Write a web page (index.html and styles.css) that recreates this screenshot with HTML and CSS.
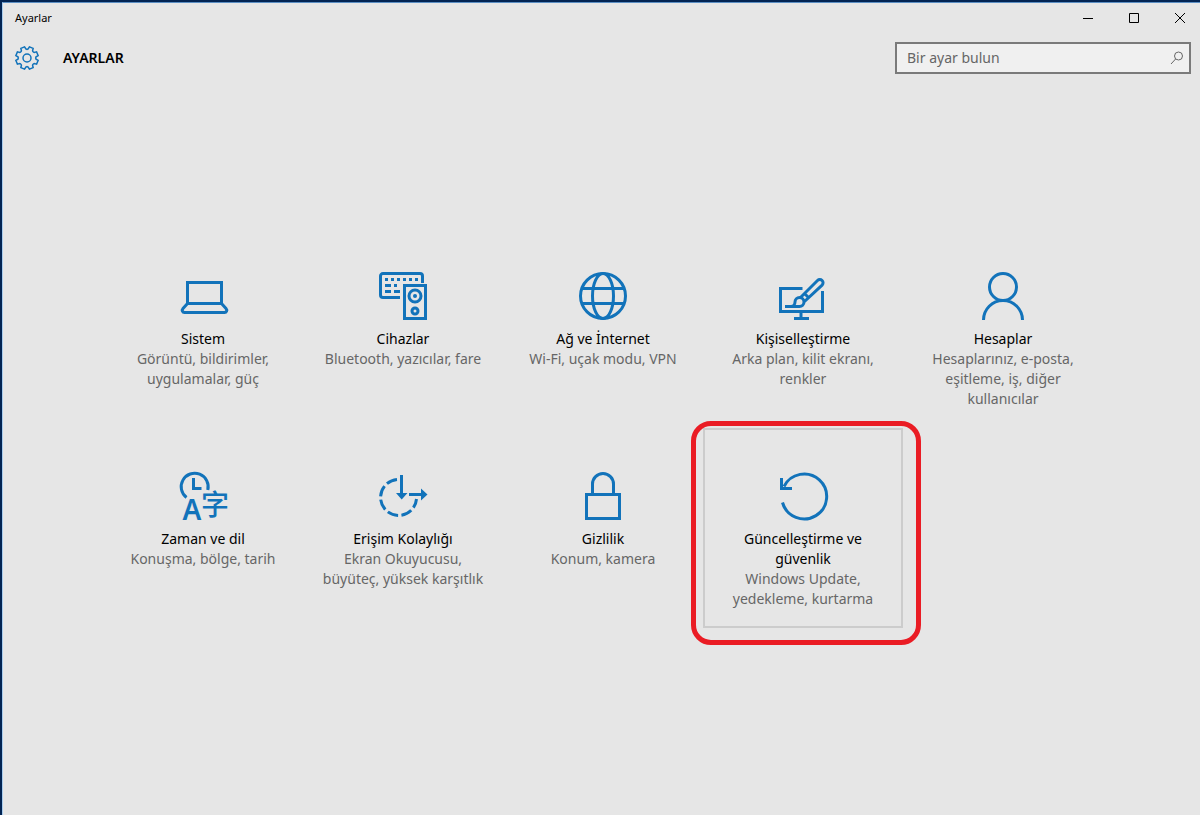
FILE: index.html
```html
<!DOCTYPE html>
<html lang="tr">
<head>
    <meta charset="UTF-8">
    <meta name="viewport" content="width=device-width, initial-scale=1.0">
    <title>Ayarlar</title>
    <link rel="stylesheet" href="styles.css">
</head>
<body>
    <div class="window">
        <div class="titlebar">
            <span class="caption">Ayarlar</span>
            <div class="window-buttons">
                <button type="button" aria-label="Simge durumuna küçült"><svg width="10" height="10" viewBox="0 0 10 10"><path d="M0 5.5h10"/></svg></button>
                <button type="button" aria-label="Ekranı kapla"><svg width="10" height="10" viewBox="0 0 10 10"><path d="M.5.5h9v9h-9z"/></svg></button>
                <button type="button" aria-label="Kapat"><svg width="10" height="10" viewBox="0 0 10 10"><path d="M0 0l10 10M10 0L0 10"/></svg></button>
            </div>
        </div>

        <header class="header">
            <svg class="gear" width="24" height="24" viewBox="-12 -12 24 24">
                <defs><path id="tooth" d="M-3.3-7.9L-2.4-8.8L-2-11.2H2L2.4-8.8L3.3-7.9"/></defs>
                <g transform="rotate(22.5)">
                    <use href="#tooth"/>
                    <use href="#tooth" transform="rotate(45)"/>
                    <use href="#tooth" transform="rotate(90)"/>
                    <use href="#tooth" transform="rotate(135)"/>
                    <use href="#tooth" transform="rotate(180)"/>
                    <use href="#tooth" transform="rotate(225)"/>
                    <use href="#tooth" transform="rotate(270)"/>
                    <use href="#tooth" transform="rotate(315)"/>
                </g>
                <circle r="4"/>
            </svg>
            <h1>AYARLAR</h1>
            <form class="search">
                <input type="text" placeholder="Bir ayar bulun" aria-label="Bir ayar bulun">
                <svg width="14" height="14" viewBox="0 0 14 14"><circle cx="8.5" cy="5" r="4"/><path d="M5.6 8L1 13"/></svg>
            </form>
        </header>

        <main class="tiles">
            <a class="tile" href="#sistem">
                <svg class="icon" viewBox="0 0 48 48">
                    <path d="M8.500 31V10.500h34V31M8.500 31.500h34l4.500 5c1.500 1.800.5 4-1.500 4h-40c-2 0-3-2.200-1.500-4z"/>
                </svg>
                <span class="name">Sistem</span>
                <span class="desc">Görüntü, bildirimler, uygulamalar, güç</span>
            </a>
            <a class="tile" href="#cihazlar">
                <svg class="icon" viewBox="0 0 48 48">
                    <path d="M21 25.5H4A2.5 2.5 0 0 1 1.5 23V4A2.5 2.5 0 0 1 4 1.5h37A2.500 2.500 0 0 1 43.500 4v7M25.500 13.500h21v33h-21z"/>
                    <path d="M6 7.5h3m3 0h3m3 0h3m3 0h3m3 0h3m3 0h3M6 13.5h6m3 0h3M6 19.5h6m3 0h6"/>
                    <circle cx="36" cy="24" r="6"/>
                    <circle class="fill" cx="36" cy="24" r="2"/>
                    <circle cx="36" cy="39" r="3"/>
                </svg>
                <span class="name">Cihazlar</span>
                <span class="desc">Bluetooth, yazıcılar, fare</span>
            </a>
            <a class="tile" href="#ag">
                <svg class="icon" viewBox="0 0 48 48">
                    <circle cx="24" cy="24" r="22.5"/>
                    <ellipse cx="24" cy="24" rx="10.5" ry="22.5"/>
                    <path d="M3 16.5h42M3 31.5h42"/>
                </svg>
                <span class="name">Ağ ve İnternet</span>
                <span class="desc">Wi-Fi, uçak modu, VPN</span>
            </a>
            <a class="tile" href="#kisisellestirme">
                <svg class="icon" viewBox="0 0 48 48">
                    <path d="M23.5 16.5h-22v23h42V19M22 40v6M15 46.5h15"/>
                    <path d="M6 34.5h14.500a4.500 4.500 0 1 0-4.500-4.500c0 3-2 4.500-4 4.500"/>
                    <path d="M21.5 25.5l17-17a3.200 3.200 0 0 1 4.600 4.600L25.500 29.500M25.500 21.500l5 5"/>
                </svg>
                <span class="name">Kişiselleştirme</span>
                <span class="desc">Arka plan, kilit ekranı, renkler</span>
            </a>
            <a class="tile" href="#hesaplar">
                <svg class="icon" viewBox="0 0 48 48">
                    <circle cx="24" cy="15" r="13.5"/>
                    <path d="M4.5 48a19.500 19.500 0 0 1 39 0"/>
                </svg>
                <span class="name">Hesaplar</span>
                <span class="desc">Hesaplarınız, e-posta, eşitleme, iş, diğer kullanıcılar</span>
            </a>
            <a class="tile" href="#zaman">
                <svg class="icon" viewBox="0 0 48 48">
                    <path d="M7.5 25.5a13.500 13.500 0 1 1 21.300-7.500M14.500 6v10.500h8"/>
                    <text class="latin" x="13" y="48">A</text>
                    <text class="kanji" x="36" y="43">字</text>
                </svg>
                <span class="name">Zaman ve dil</span>
                <span class="desc">Konuşma, bölge, tarih</span>
            </a>
            <a class="tile" href="#erisim">
                <svg class="icon" viewBox="0 0 48 48">
                    <path stroke-dasharray="11 3.4" d="M18 7.5A18 18 0 1 0 37.5 27"/>
                    <path d="M22.5 3v20M30 22.500h13"/>
                    <path class="fill" d="M17 21h11.500l-5.800 6.500zM42 16.500l6.500 6-6.500 6z"/>
                </svg>
                <span class="name">Erişim Kolaylığı</span>
                <span class="desc">Ekran Okuyucusu, büyüteç, yüksek karşıtlık</span>
            </a>
            <a class="tile" href="#gizlilik">
                <svg class="icon" viewBox="0 0 48 48">
                    <path d="M7.5 22.5h33v24h-33zM13.500 22V12a10.500 10.500 0 0 1 21 0v10"/>
                </svg>
                <span class="name">Gizlilik</span>
                <span class="desc">Konum, kamera</span>
            </a>
            <a class="tile selected" href="#guncellestirme">
                <svg class="icon" viewBox="0 0 48 48">
                    <path d="M3.5 30.5A22.500 22.500 0 1 0 5 14.500M2.500 6v10.500H13"/>
                </svg>
                <span class="name">Güncelleştirme ve güvenlik</span>
                <span class="desc">Windows Update, yedekleme, kurtarma</span>
            </a>
        </main>
    </div>
</body>
</html>
```
FILE: styles.css
```css
* {
    box-sizing: border-box;
}
body {
    margin: 0;
    background: #022453;
    color: #000;
    font-family: "Noto Sans", "Open Sans", sans-serif;
    font-size: 14px;
    line-height: 20px;
    overflow-x: hidden;
}

/* the window runs slightly past the right edge of the screen */
.window {
    min-height: calc(100vh - 2px);
    margin: 2px -3px 0 2px;
    border-top: 1px solid #5b8fc4;
    border-left: 1px solid #a9cdee;
    background: #e6e6e6;
}
svg {
    fill: none;
    stroke: #1273ba;
}

.titlebar {
    display: flex;
    justify-content: space-between;
    height: 30px;
}
.caption {
    padding: 5px 12px;
    font-size: 11px;
}
.window-buttons {
    display: flex;
}
.window-buttons button {
    display: flex;
    align-items: center;
    justify-content: center;
    width: 46px;
    padding: 0;
    border: none;
    background: none;
}
.window-buttons button:hover {
    background: #d0d0d0;
}
.window-buttons svg {
    stroke: #000;
}

.header {
    display: flex;
    align-items: center;
    padding: 9px 12px 0;
}
.gear {
    stroke-width: 1.5;
}
h1 {
    margin: 0 0 0 24px;
    font-size: 14px;
    font-weight: 600;
}
.search {
    display: flex;
    align-items: center;
    width: 296px;
    height: 32px;
    margin-left: auto;
    padding: 0 5px 0 10px;
    border: 2px solid #7a7a7a;
    background: #f0f0f0;
}
.search input {
    flex: 1;
    min-width: 0;
    padding: 0;
    border: none;
    outline: none;
    background: none;
    font: inherit;
}
.search input::placeholder {
    color: #666;
    opacity: 1;
}
.search svg {
    stroke: #666;
}

.tiles {
    display: grid;
    grid-template-columns: repeat(auto-fit, 200px);
    grid-auto-rows: 200px;
    justify-content: center;
    max-width: 1000px;
    margin: 0 auto;
    padding: 154px 0 40px;
}
.tile {
    position: relative;
    display: flex;
    flex-direction: column;
    align-items: center;
    padding: 42px 16px 0;
    border: 2px solid transparent;
    color: #000;
    text-align: center;
    text-decoration: none;
}
.tile:hover,
.tile.selected {
    border-color: #ccc;
}
.icon {
    width: 48px;
    height: 48px;
    margin-bottom: 9px;
    stroke-width: 3;
    overflow: visible;
}
.icon .fill {
    fill: #1273ba;
    stroke: none;
}
.icon text {
    fill: #1273ba;
    stroke: none;
    text-anchor: middle;
}
.icon .latin {
    font-size: 28px;
    font-weight: 600;
}
.icon .kanji {
    font-family: "Noto Sans CJK SC", sans-serif;
    font-size: 28px;
    font-weight: 500;
}
.desc {
    color: #666;
}

/* red marker around the selected tile */
.selected::after {
    content: "";
    position: absolute;
    inset: -9px -20px -19px -14px;
    border: 5px solid #ea1c24;
    border-radius: 20px;
}
```
